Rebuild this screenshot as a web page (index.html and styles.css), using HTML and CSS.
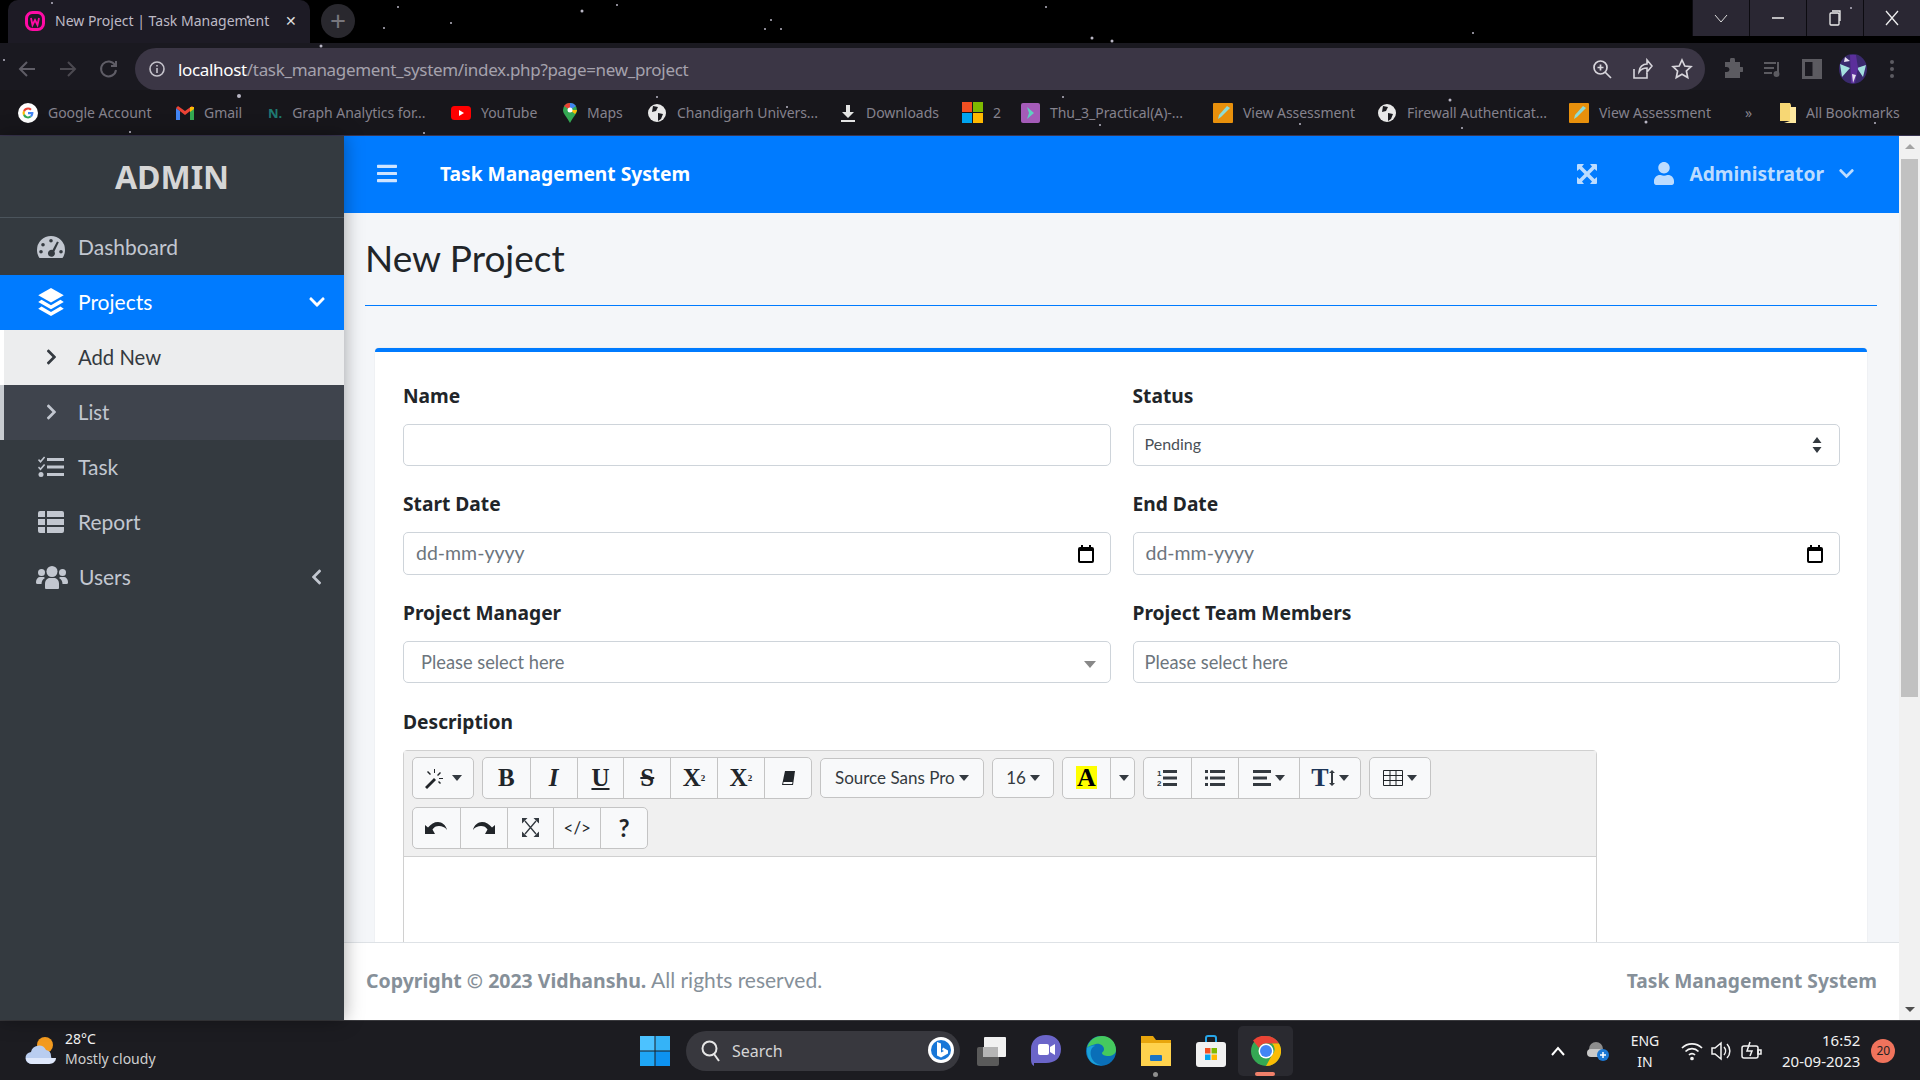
FILE: index.html
```html
<!DOCTYPE html>
<html lang="en">
<head>
	<meta charset="UTF-8">
	<title>New Project | Task Management System</title>
	<link rel="stylesheet" href="styles.css">
</head>
<body>
	<div class="chrome">
		<svg class="stars" width="1920" height="135" fill="#b9b6c4">
			<circle cx="582" cy="11" r="1.5"/><circle cx="398" cy="7" r="1"/><circle cx="451" cy="23" r="1"/><circle cx="384" cy="28" r="1"/><circle cx="771" cy="20" r="1"/><circle cx="765" cy="29" r="1"/><circle cx="781" cy="29" r="1"/><circle cx="321" cy="46" r="1.5"/><circle cx="239" cy="96" r="2"/><circle cx="248" cy="17" r="1.5"/><circle cx="657" cy="97" r="1"/><circle cx="617" cy="5" r="1"/><circle cx="424" cy="133" r="1"/><circle cx="787" cy="107" r="1"/><circle cx="1046" cy="7" r="1"/><circle cx="1092" cy="38" r="1.5"/><circle cx="1112" cy="41" r="1.5"/><circle cx="1473" cy="33" r="1"/><circle cx="1063" cy="97" r="1"/><circle cx="1450" cy="100" r="1.5"/><circle cx="1646" cy="122" r="1.5"/><circle cx="1875" cy="123" r="1"/><circle cx="1851" cy="8" r="1"/><circle cx="1462" cy="128" r="1"/><circle cx="1300" cy="124" r="1"/><circle cx="1100" cy="125" r="1"/><circle cx="52" cy="3" r="1"/><circle cx="4" cy="60" r="1"/><circle cx="130" cy="132" r="1"/>
		</svg>
		<div class="tabstrip">
			<div class="tab">
				<svg class="favicon" viewBox="0 0 20 20" width="20" height="20"><rect x="1.5" y="1.5" width="17" height="17" rx="6" fill="none" stroke="#ff0ba5" stroke-width="3"/><path d="M6 7l1.500 7L10 9l2.500 5L14 7" fill="none" stroke="#ff0ba5" stroke-width="1.800"/></svg>
				<span class="tab-title">New Project | Task Management</span>
				<span class="tab-close">✕</span>
			</div>
			<div class="new-tab">+</div>
			<div class="win-btns">
				<div class="win-btn"><svg width="14" height="14" viewBox="0 0 14 14" fill="none" stroke="#ddd" stroke-width="1"><path d="M1 4l6 7 6-7"/></svg></div>
				<div class="win-btn"><svg width="14" height="14" viewBox="0 0 14 14" stroke="#eee" stroke-width="1.500"><path d="M1 7h12"/></svg></div>
				<div class="win-btn"><svg width="14" height="16" viewBox="0 0 14 16" fill="none" stroke="#eee" stroke-width="1.300"><rect x="2" y="3" width="9" height="12" rx="1"/><path d="M4 1h8v10"/></svg></div>
				<div class="win-btn"><svg width="14" height="16" viewBox="0 0 14 16" stroke="#eee" stroke-width="1.300"><path d="M1 1l12 14M13 1L1 15"/></svg></div>
			</div>
		</div>
		<div class="toolbar">
			<svg class="nav-icon" width="20" height="20" viewBox="0 0 20 20" fill="none" stroke="#5f5d66" stroke-width="2"><path d="M18 10H3M10 3l-7 7 7 7"/></svg>
			<svg class="nav-icon" width="20" height="20" viewBox="0 0 20 20" fill="none" stroke="#4b4950" stroke-width="2"><path d="M2 10h15M10 3l7 7-7 7"/></svg>
			<svg class="nav-icon" width="20" height="20" viewBox="0 0 20 20" fill="none" stroke="#5f5d66" stroke-width="2"><path d="M16 6a7.500 7.500 0 1 0 1 5"/><path d="M17 2v5h-5"/></svg>
			<div class="urlbar">
				<svg class="info" width="18" height="18" viewBox="0 0 18 18" fill="none" stroke="#c5c3cb" stroke-width="1.600"><circle cx="9" cy="9" r="7"/><path d="M9 8v5M9 5v1.500"/></svg>
				<span class="url"><b>localhost</b>/task_management_system/index.php?page=new_project</span>
				<svg class="url-icon" width="22" height="22" viewBox="0 0 22 22" fill="none" stroke="#d8d6dc" stroke-width="1.700"><circle cx="9.500" cy="9.500" r="6.500"/><path d="M14 14l6 6M9.500 6.500v6M6.500 9.500h6"/></svg>
				<svg class="url-icon" width="22" height="22" viewBox="0 0 22 22" fill="none" stroke="#d8d6dc" stroke-width="1.600"><path d="M3 11v9h13v-5"/><path d="M8 14c0-5 4-8 8-8V2l5 6-5 6v-4c-3 0-6 1-8 4z"/></svg>
				<svg class="url-icon" width="22" height="22" viewBox="0 0 22 22" fill="none" stroke="#d8d6dc" stroke-width="1.700"><path d="M11 2l2.800 6 6.200.7-4.600 4.300 1.300 6.500L11 16.300l-5.700 3.200L6.600 13 2 8.700 8.200 8z"/></svg>
			</div>
			<div class="ext-icons">
				<svg width="20" height="22" viewBox="0 0 20 22" fill="#5c5b61"><path d="M7 2a2.500 2.500 0 0 1 5 0v2h5v5h2a2.500 2.500 0 0 1 0 5h-2v6H2v-6h2a2.500 2.500 0 0 0 0-5H2V4h5z"/></svg>
				<svg width="20" height="20" viewBox="0 0 20 20" fill="none" stroke="#5c5b61" stroke-width="2"><path d="M1 4h12M1 9h10M1 14h8M15 3v12"/><circle cx="13.500" cy="15" r="2" fill="#5c5b61"/></svg>
				<svg width="20" height="20" viewBox="0 0 20 20" fill="none" stroke="#5c5b61"><rect x="1.500" y="1.500" width="17" height="17" stroke-width="3"/><rect x="11" y="2" width="6" height="16" fill="#5c5b61"/></svg>
				<svg class="avatar" width="28" height="30" viewBox="0 0 28 30"><ellipse cx="14" cy="15" rx="14" ry="15" fill="#3a2a6e"/><path d="M1 10l10 4-8 9zM27 11l-9 3 6 9z" fill="#a4e0e0"/><path d="M11 1h6l2 13-3 15h-4z" fill="#5b2f9b"/><path d="M6 3l5 4-6 1zM13 20l4 1-3 8z" fill="#e6e0f0"/></svg>
				<svg width="6" height="20" viewBox="0 0 6 20" fill="#5c5b61"><circle cx="3" cy="3" r="2"/><circle cx="3" cy="10" r="2"/><circle cx="3" cy="17" r="2"/></svg>
			</div>
		</div>
		<div class="bookmarks">
			<div class="bm"><svg width="20" height="20" viewBox="0 0 20 20"><circle cx="10" cy="10" r="10" fill="#fff"/><path d="M10 4.500a5.500 5.500 0 0 1 3.700 1.400l-1.500 1.500A3.300 3.300 0 0 0 6.900 9L5.100 7.600A5.500 5.500 0 0 1 10 4.500z" fill="#ea4335"/><path d="M5.100 7.600L6.900 9a3.300 3.300 0 0 0 0 2l-1.800 1.400a5.500 5.500 0 0 1 0-4.800z" fill="#fbbc05"/><path d="M6.900 11a3.300 3.300 0 0 0 5 1.800l1.700 1.300a5.500 5.500 0 0 1-8.500-1.700z" fill="#34a853"/><path d="M15.400 9H10v2.200h3.100a2.700 2.700 0 0 1-1.200 1.600l1.700 1.300c1.200-1.100 2-3 1.800-5.100z" fill="#4285f4"/></svg><span>Google Account</span></div>
			<div class="bm"><svg width="18" height="14" viewBox="0 0 18 14"><path d="M0 2v12h4V5z" fill="#4285f4"/><path d="M14 5v9h4V2z" fill="#34a853"/><path d="M0 2l9 7 9-7-2-2-7 5-7-5z" fill="#ea4335"/><path d="M14 1l4 0v2l-4 3z" fill="#fbbc05"/></svg><span>Gmail</span></div>
			<div class="bm"><b class="bm-n">N.</b><span>Graph Analytics for...</span></div>
			<div class="bm"><svg width="20" height="14" viewBox="0 0 20 14"><rect width="20" height="14" rx="3.500" fill="#f00"/><path d="M8 4l5 3-5 3z" fill="#fff"/></svg><span>YouTube</span></div>
			<div class="bm"><svg width="14" height="20" viewBox="0 0 14 20"><path d="M7 0a7 7 0 0 1 7 7c0 4-4 7-7 13C4 14 0 11 0 7a7 7 0 0 1 7-7z" fill="#34a853"/><path d="M1 3a7 7 0 0 1 6-3v7z" fill="#ea4335"/><path d="M7 0a7 7 0 0 1 6 3L7 7z" fill="#4285f4"/><path d="M14 7c0 1-1 3-2 4L7 7z" fill="#fbbc05"/><circle cx="7" cy="7" r="2.500" fill="#fff"/></svg><span>Maps</span></div>
			<div class="bm"><svg width="20" height="20" viewBox="0 0 20 20"><circle cx="10" cy="10" r="9" fill="#e8e8e8"/><path d="M6 3l5 1-2 4-4 1zM11 10l5 1-2 5-3 2z" fill="#1a1a1f"/></svg><span>Chandigarh Univers...</span></div>
			<div class="bm"><svg width="16" height="20" viewBox="0 0 16 20" fill="#e4e4e4"><path d="M6 2h4v7h4l-6 6-6-6h4zM1 17h14v2H1z"/></svg><span>Downloads</span></div>
			<div class="bm"><svg width="21" height="21" viewBox="0 0 21 21"><rect width="10" height="10" fill="#f25022"/><rect x="11" width="10" height="10" fill="#7fba00"/><rect y="11" width="10" height="10" fill="#00a4ef"/><rect x="11" y="11" width="10" height="10" fill="#ffb900"/></svg><span>2</span></div>
			<div class="bm"><svg width="19" height="20" viewBox="0 0 19 20"><rect width="19" height="20" rx="2" fill="#a45bb8"/><path d="M6 4l7 6-7 6 2-6z" fill="#5fd0c0"/></svg><span>Thu_3_Practical(A)-...</span></div>
			<div class="bm"><svg width="20" height="20" viewBox="0 0 20 20"><rect width="20" height="20" rx="1" fill="#e8900c"/><path d="M5 16l1-4 8-9 3 2-9 9z" fill="#8fdcd6"/></svg><span>View Assessment</span></div>
			<div class="bm"><svg width="20" height="20" viewBox="0 0 20 20"><circle cx="10" cy="10" r="9" fill="#e8e8e8"/><path d="M6 3l5 1-2 4-4 1zM11 10l5 1-2 5-3 2z" fill="#1a1a1f"/></svg><span>Firewall Authenticat...</span></div>
			<div class="bm"><svg width="20" height="20" viewBox="0 0 20 20"><rect width="20" height="20" rx="1" fill="#e8900c"/><path d="M5 16l1-4 8-9 3 2-9 9z" fill="#8fdcd6"/></svg><span>View Assessment</span></div>
			<div class="bm"><span>»</span></div>
			<div class="bm"><svg width="16" height="20" viewBox="0 0 16 20"><path d="M0 0h10l1 2v16H0z" fill="#f7d774"/><path d="M10 4h6v16H4l6-2z" fill="#ffe9a0"/></svg><span>All Bookmarks</span></div>
		</div>
	</div>

	<div class="viewport">
		<aside class="sidebar">
			<div class="brand">ADMIN</div>
			<nav class="side-nav">
				<a class="nav-item"><svg class="nav-ico" viewBox="0 0 28 24"><path fill-rule="evenodd" d="M14 1A14 14 0 0 0 0 15c0 3 1 6 2.500 8h23C27 21 28 18 28 15A14 14 0 0 0 14 1zM14 4a1.800 1.800 0 1 1 0 3.600A1.800 1.800 0 0 1 14 4zM6 8a1.800 1.800 0 1 1 0 3.600A1.800 1.800 0 0 1 6 8zM4 15a1.800 1.800 0 1 1 0 3.600A1.800 1.800 0 0 1 4 15zM24 15a1.800 1.800 0 1 1 0 3.600 1.800 1.800 0 0 1 0-3.600zM20 6.500l1.800.7-4.400 9.300A3.500 3.500 0 1 1 15.500 15z"/></svg><span>Dashboard</span></a>
				<a class="nav-item active"><svg class="nav-ico tall" viewBox="2 0 24 27"><path d="M14 1l11.500 6.500L14 14 2.500 7.500z"/><path d="M5.500 11.500L14 16.500l8.500-5 3 2L14 20 2.500 13.500z"/><path d="M5.500 17.500L14 22.500l8.500-5 3 2L14 26 2.500 19.500z"/></svg><span>Projects</span><svg class="nav-arrow down" width="16" height="18" viewBox="0 0 448 512"><path d="M207.029 381.476L12.686 187.132c-9.373-9.373-9.373-24.569 0-33.941l22.667-22.667c9.357-9.357 24.522-9.375 33.901-.04L224 284.505l154.745-154.021c9.379-9.335 24.544-9.317 33.901.04l22.667 22.667c9.373 9.373 9.373 24.569 0 33.941L240.971 381.476c-9.373 9.372-24.569 9.372-33.942 0z"/></svg></a>
				<a class="nav-item sub current"><svg class="sub-ico" width="11" height="18" viewBox="0 0 320 512"><path d="M285.476 272.971L91.132 467.314c-9.373 9.373-24.569 9.373-33.941 0l-22.667-22.667c-9.357-9.357-9.375-24.522-.04-33.901L188.505 256 34.484 101.255c-9.335-9.379-9.317-24.544.04-33.901l22.667-22.667c9.373-9.373 24.569-9.373 33.941 0L285.475 239.03c9.373 9.372 9.373 24.568.001 33.941z"/></svg><span>Add New</span></a>
				<a class="nav-item sub"><svg class="sub-ico" width="11" height="18" viewBox="0 0 320 512"><path d="M285.476 272.971L91.132 467.314c-9.373 9.373-24.569 9.373-33.941 0l-22.667-22.667c-9.357-9.357-9.375-24.522-.04-33.901L188.505 256 34.484 101.255c-9.335-9.379-9.317-24.544.04-33.901l22.667-22.667c9.373-9.373 24.569-9.373 33.941 0L285.475 239.03c9.373 9.372 9.373 24.568.001 33.941z"/></svg><span>List</span></a>
				<a class="nav-item"><svg class="nav-ico" viewBox="0 0 28 24"><path d="M10 3h17v3H10zM10 10.500h17v3H10zM10 18h17v3H10z"/><path d="M2 4l1.500 1.500L7 1.500l1.200 1L3.500 8 1 5.200zM2 11.500L3.500 13 7 9l1.200 1-4.700 5.500L1 12.700z"/><circle cx="4" cy="19.500" r="2.500"/></svg><span>Task</span></a>
				<a class="nav-item"><svg class="nav-ico" viewBox="0 0 28 24"><path d="M3 1h5v6H1V3a2 2 0 0 1 2-2zM10 1h15a2 2 0 0 1 2 2v4H10zM1 9h7v6H1zM10 9h17v6H10zM1 17h7v6H3a2 2 0 0 1-2-2zM10 17h17v4a2 2 0 0 1-2 2H10z"/></svg><span>Report</span></a>
				<a class="nav-item"><svg class="nav-ico wide" viewBox="0 0 32 24"><circle cx="16" cy="6.500" r="5.500"/><circle cx="5.500" cy="7.500" r="3.500"/><circle cx="26.500" cy="7.500" r="3.500"/><path d="M9 23v-4c0-3.500 2-6 5-6h4c3 0 5 2.500 5 6v4a1 1 0 0 1-1 1H10a1 1 0 0 1-1-1z"/><path d="M0 17c0-3 2-5 4-5h3c1 0 1.500.5 2 1-2 1-3.500 3-3.500 6H1.500A1.500 1.500 0 0 1 0 17.500zM32 17c0-3-2-5-4-5h-3c-1 0-1.500.5-2 1 2 1 3.500 3 3.500 6h4a1.500 1.500 0 0 0 1.500-1.500z"/></svg><span>Users</span><svg class="nav-arrow flip" width="11" height="18" viewBox="0 0 320 512"><path d="M285.476 272.971L91.132 467.314c-9.373 9.373-24.569 9.373-33.941 0l-22.667-22.667c-9.357-9.357-9.375-24.522-.04-33.901L188.505 256 34.484 101.255c-9.335-9.379-9.317-24.544.04-33.901l22.667-22.667c9.373-9.373 24.569-9.373 33.941 0L285.475 239.03c9.373 9.372 9.373 24.568.001 33.941z"/></svg></a>
			</nav>
		</aside>

		<main class="main">
			<header class="topbar">
				<svg class="bars" width="20" height="23" viewBox="0 0 448 512"><path d="M16 132h416c8.837 0 16-7.163 16-16V76c0-8.837-7.163-16-16-16H16C7.163 60 0 67.163 0 76v40c0 8.837 7.163 16 16 16zm0 160h416c8.837 0 16-7.163 16-16v-40c0-8.837-7.163-16-16-16H16c-8.837 0-16 7.163-16 16v40c0 8.837 7.163 16 16 16zm0 160h416c8.837 0 16-7.163 16-16v-40c0-8.837-7.163-16-16-16H16c-8.837 0-16 7.163-16 16v40c0 8.837 7.163 16 16 16z"/></svg>
				<span class="app-title">Task Management System</span>
				<svg class="expand" width="20" height="20" viewBox="0 0 20 20"><path d="M0 1a1 1 0 0 1 1-1h6L5 2.500 10 7.500 15 2.500 13 0h6a1 1 0 0 1 1 1v6l-2.500-2L12.500 10l5 5 2.500-2v6a1 1 0 0 1-1 1h-6l2-2.500-5-5-5 5L7 20H1a1 1 0 0 1-1-1v-6l2.500 2 5-5-5-5L0 7z"/></svg>
				<svg class="user-ico" width="20" height="23" viewBox="0 0 448 512"><path d="M224 256c70.700 0 128-57.300 128-128S294.700 0 224 0 96 57.300 96 128s57.300 128 128 128zm89.600 32h-16.700c-22.200 10.200-46.900 16-72.900 16s-50.600-5.800-72.900-16h-16.700C60.200 288 0 348.200 0 422.400V464c0 26.500 21.500 48 48 48h352c26.500 0 48-21.500 48-48v-41.600c0-74.200-60.200-134.400-134.400-134.400z"/></svg>
				<span class="admin-name">Administrator</span>
				<svg class="admin-caret" width="15" height="17" viewBox="0 0 448 512"><path d="M207.029 381.476L12.686 187.132c-9.373-9.373-9.373-24.569 0-33.941l22.667-22.667c9.357-9.357 24.522-9.375 33.901-.04L224 284.505l154.745-154.021c9.379-9.335 24.544-9.317 33.901.04l22.667 22.667c9.373 9.373 9.373 24.569 0 33.941L240.971 381.476c-9.373 9.372-24.569 9.372-33.942 0z"/></svg>
			</header>

			<div class="content">
				<h1 class="page-title">New Project</h1>
				<hr class="title-rule">
				<section class="card">
					<div class="form-grid">
						<div class="field"><label>Name</label><div class="control"></div></div>
						<div class="field"><label>Status</label><div class="control small">Pending<svg class="updown" width="10" height="16" viewBox="0 0 10 16" fill="#343a40"><path d="M5 0l4.500 6H.5zM5 16L.5 10h9z"/></svg></div></div>
						<div class="field"><label>Start Date</label><div class="control date">dd-mm-yyyy<svg class="cal" width="16" height="18" viewBox="0 0 16 18" fill="none" stroke="#000" stroke-width="2"><rect x="1" y="3" width="14" height="14" rx="1"/><path d="M1 5h14M4 0v3M12 0v3"/></svg></div></div>
						<div class="field"><label>End Date</label><div class="control date">dd-mm-yyyy<svg class="cal" width="16" height="18" viewBox="0 0 16 18" fill="none" stroke="#000" stroke-width="2"><rect x="1" y="3" width="14" height="14" rx="1"/><path d="M1 5h14M4 0v3M12 0v3"/></svg></div></div>
						<div class="field"><label>Project Manager</label><div class="control select2">Please select here<i class="s2-caret"></i></div></div>
						<div class="field"><label>Project Team Members</label><div class="control placeholder">Please select here</div></div>
					</div>
					<div class="field desc">
						<label>Description</label>
						<div class="editor">
							<div class="ed-toolbar">
								<div class="ed-row">
									<div class="btn-group"><button class="tb w60"><svg width="24" height="22" viewBox="0 0 24 22" fill="#212529"><path d="M1 20l9-9 2 2-9 9zM10 2h1v4h-1zM3 5l1-1 3 3-1 1zM16 5l1 1-3 3-1-1zM15 11h4v1h-4zM14 15l1-1 2 2-1 1z"/></svg><i class="caret"></i></button></div>
									<div class="btn-group">
										<button class="tb w47 serif">B</button>
										<button class="tb w47 serif it">I</button>
										<button class="tb w47 serif un">U</button>
										<button class="tb w47 serif st">S</button>
										<button class="tb w47 serif">X<sup>2</sup></button>
										<button class="tb w47 serif">X<sub>2</sub></button>
										<button class="tb w47"><svg width="16" height="16" viewBox="0 0 16 16"><path d="M5 1h10l-2 14H2z" fill="#212529"/><path d="M3.500 12h9l-.4 2H3.200z" fill="#f8f9fa"/></svg></button>
									</div>
									<div class="btn-group low"><button class="tb w162 txt">Source Sans Pro<i class="caret"></i></button></div>
									<div class="btn-group low"><button class="tb w60 txt">16<i class="caret"></i></button></div>
									<div class="btn-group">
										<button class="tb w47"><span class="hl">A</span></button>
										<button class="tb w24"><i class="caret"></i></button>
									</div>
									<div class="btn-group">
										<button class="tb w47"><svg width="20" height="18" viewBox="0 0 20 18" fill="#343a40"><path d="M6 1h14v3H6zM6 7.500h14v3H6zM6 14h14v3H6z"/><text x="0" y="7" font-size="8" font-family="Liberation Sans" font-weight="700">1</text><text x="0" y="17" font-size="8" font-family="Liberation Sans" font-weight="700">2</text></svg></button>
										<button class="tb w47"><svg width="20" height="18" viewBox="0 0 20 18" fill="#343a40"><path d="M5 1h15v3H5zM5 7.500h15v3H5zM5 14h15v3H5zM0 1h3v3H0zM0 7.500h3v3H0zM0 14h3v3H0z"/></svg></button>
										<button class="tb w61"><svg width="18" height="16" viewBox="0 0 18 16" fill="#343a40"><path d="M0 0h18v3H0zM0 6.500h14v3H0zM0 13h18v3H0z"/></svg><i class="caret"></i></button>
										<button class="tb w61 serif tsize">T<svg width="6" height="16" viewBox="0 0 6 16" fill="#343a40"><path d="M3 0l3 3H4v10h2l-3 3-3-3h2V3H0z"/></svg><i class="caret"></i></button>
									</div>
									<div class="btn-group"><button class="tb w60"><svg width="20" height="16" viewBox="0 0 20 16" fill="none" stroke="#212529" stroke-width="1"><path d="M.5.5h19v15H.5zM.5 5.500h19M.5 10.500h19M7 .5v15M13 .5v15"/></svg><i class="caret"></i></button></div>
								</div>
								<div class="ed-row">
									<div class="btn-group">
										<button class="tb w47"><svg width="22" height="12" viewBox="0 0 22 12" fill="#212529"><path d="M0 12V3l3 2.500C6 2 9 0 13 0c4 0 8 3 9 8-2-3-5-4-8-4-3 0-5 1-6.500 3.500L10 12z"/></svg></button>
										<button class="tb w47"><svg width="22" height="12" viewBox="0 0 22 12" fill="#212529"><path d="M22 12V3l-3 2.500C16 2 13 0 9 0 5 0 1 3 0 8c2-3 5-4 8-4 3 0 5 1 6.500 3.500L12 12z"/></svg></button>
										<button class="tb w47"><svg width="17" height="19" viewBox="0 0 17 19" fill="#343a40" stroke="#343a40"><path d="M3 3l11 13M14 3L3 16" stroke-width="1.300" fill="none"/><path d="M0 0h5.500L0 5.500zM17 0h-5.500L17 5.500zM0 19h5.500L0 13.500zM17 19h-5.500L17 13.500z" stroke="none"/></svg></button>
										<button class="tb w47 code">&lt;/&gt;</button>
										<button class="tb w47 help">?</button>
									</div>
								</div>
							</div>
							<div class="ed-body"></div>
						</div>
					</div>
				</section>
			</div>

			<footer class="footer">
				<span><b>Copyright © 2023 Vidhanshu.</b> All rights reserved.</span>
				<b class="footer-app">Task Management System</b>
			</footer>
		</main>

		<div class="scrollbar">
			<i class="sb-up"></i>
			<div class="sb-thumb"></div>
			<i class="sb-down"></i>
		</div>
	</div>

	<div class="taskbar">
		<div class="weather">
			<svg width="32" height="30" viewBox="0 0 32 30"><circle cx="20" cy="9" r="8" fill="#f39a1f"/><path d="M7 28a6 6 0 0 1-1-12 8 8 0 0 1 15-2 6 6 0 0 1 5 6 8 8 0 0 1-2 8z" fill="#b9cdf0"/><path d="M7 28a6 6 0 0 1-6-6h30c0 3-3 6-7 6z" fill="#dfe8fb"/></svg>
			<div class="weather-text"><span>28°C</span><span class="dim">Mostly cloudy</span></div>
		</div>
		<div class="task-center">
			<svg width="30" height="30" viewBox="0 0 30 30"><rect width="14.500" height="14.500" fill="#4cc2ff"/><rect x="15.500" width="14.500" height="14.500" fill="#35b3f7"/><rect y="15.500" width="14.500" height="14.500" fill="#1fa6f5"/><rect x="15.500" y="15.500" width="14.500" height="14.500" fill="#0d92f0"/></svg>
			<div class="search">
				<svg width="20" height="22" viewBox="0 0 20 22" fill="none" stroke="#e6e6e6" stroke-width="2"><circle cx="8.500" cy="8.500" r="7"/><path d="M13 14l5 7"/></svg>
				<span>Search</span>
				<svg class="bing" width="28" height="30" viewBox="0 0 28 30"><circle cx="14" cy="14" r="13" fill="#fff"/><circle cx="14" cy="14" r="10" fill="#1877d8"/><path d="M10 6l4 1.500v9l3-1.500-2-1 1-2.500 5 3v3l-7 4-4-2z" fill="#fff"/></svg>
			</div>
			<div class="task-apps">
				<div class="app"><svg width="30" height="30" viewBox="0 0 30 30"><rect x="1" y="11" width="22" height="19" rx="2" fill="#5a5a5a"/><rect x="8" y="1" width="22" height="20" rx="1" fill="#f1f1f1"/><rect x="7" y="11" width="15" height="10" fill="#b5b5b5"/></svg></div>
				<div class="app"><svg width="30" height="32" viewBox="0 0 30 32"><path d="M15 0c9 0 15 6 15 14 0 9-6 14-15 14H3v3c-2-1-3-3-3-6V14C0 6 6 0 15 0z" fill="#6b65c9"/><rect x="7" y="9" width="11" height="11" rx="2" fill="#fff"/><path d="M19 12l5-3v11l-5-3z" fill="#fff"/></svg></div>
				<div class="app"><svg width="30" height="30" viewBox="0 0 30 30"><circle cx="15" cy="15" r="15" fill="#0a6fb8"/><path d="M1 12C3 4 9 0 16 0c8 0 14 6 14 14 0 4-4 6-8 6-3 0-6-1-6-3 0-1 2-1 2-4 0-3-4-6-8-5-5 1-8 3-9 4z" fill="#45c95e"/><path d="M1 12c3-2 6-3 8-2-4 1-5 6-4 10 1 4 4 8 10 9C6 30 0 23 1 12z" fill="#1ba0d8"/></svg></div>
				<div class="app with-dot"><svg width="30" height="30" viewBox="0 0 30 30"><path d="M0 0h12l3 4h15v26H0z" fill="#e8a50c"/><rect y="7" width="30" height="23" fill="#ffd24d"/><rect x="9" y="19" width="12" height="6" rx="1" fill="#1a74c4"/></svg></div>
				<div class="app"><svg width="30" height="32" viewBox="0 0 30 32"><path d="M10 7V3a2 2 0 0 1 2-2h6a2 2 0 0 1 2 2v4" fill="none" stroke="#27a5e8" stroke-width="2"/><rect y="7" width="30" height="25" rx="3" fill="#f1f1f1"/><rect x="9" y="13" width="5.500" height="5.500" fill="#f25022"/><rect x="15.500" y="13" width="5.500" height="5.500" fill="#7fba00"/><rect x="9" y="19.500" width="5.500" height="5.500" fill="#00a4ef"/><rect x="15.500" y="19.500" width="5.500" height="5.500" fill="#ffb900"/></svg></div>
				<div class="app chrome-app"><svg width="30" height="30" viewBox="0 0 30 30"><circle cx="15" cy="15" r="15" fill="#34a853"/><path d="M15 0a15 15 0 0 1 13 7.500H15A7.500 7.500 0 0 0 8 12L2 4.500A15 15 0 0 1 15 0z" fill="#ea4335"/><path d="M28 7.500A15 15 0 0 1 15 30l6-11a7.500 7.500 0 0 0 0-11.500z" fill="#fbbc05"/><circle cx="15" cy="15" r="7.500" fill="#fff"/><circle cx="15" cy="15" r="6" fill="#4285f4"/></svg></div>
			</div>
		</div>
		<div class="tray">
			<svg width="16" height="10" viewBox="0 0 16 10" fill="none" stroke="#fff" stroke-width="2"><path d="M2 9l6-7 6 7"/></svg>
			<svg class="tray-cloud" width="22" height="22" viewBox="0 0 22 22"><circle cx="9" cy="9" r="7" fill="#8d8d8d"/><rect y="9" width="16" height="8" rx="4" fill="#c9c9c9"/><circle cx="16" cy="15" r="6" fill="#1c78d4"/><path d="M13 15h6M16 12v6" stroke="#fff" stroke-width="1.500"/></svg>
			<div class="lang"><span>ENG</span><span>IN</span></div>
			<svg class="tray-ico" width="22" height="20" viewBox="0 0 22 20" fill="none" stroke="#f2f2f2" stroke-width="1.700"><path d="M1 7a14 14 0 0 1 20 0M4.500 10.500a9 9 0 0 1 13 0M8 14a4 4 0 0 1 6 0"/><circle cx="11" cy="17.500" r="1" fill="#f2f2f2"/></svg>
			<svg class="tray-ico" width="22" height="20" viewBox="0 0 22 20" fill="none" stroke="#f2f2f2" stroke-width="1.500"><path d="M1 7v6h3l6 5V2L4 7zM13 6a6 6 0 0 1 0 8M16 3a10 10 0 0 1 0 14"/></svg>
			<svg class="tray-ico" width="22" height="20" viewBox="0 0 22 20" fill="none" stroke="#f2f2f2" stroke-width="1.500"><rect x="1" y="5" width="16" height="12" rx="2"/><rect x="17" y="9" width="3" height="4"/><path d="M9 1L6 10h5l-2 5"/></svg>
			<div class="clock"><span>16:52</span><span>20-09-2023</span></div>
			<div class="badge">20</div>
		</div>
	</div>
</body>
</html>
```

FILE: styles.css
```css
*{margin:0;padding:0;box-sizing:border-box;}
html,body{height:100%;}
body{
	height:100vh;
	overflow:hidden;
	display:flex;
	flex-direction:column;
	font-family:Lato,"Liberation Sans",sans-serif;
	background:#f4f6f9;
}

/* browser chrome */
.chrome{
	position:relative;
	flex:none;
	height:135px;
	background:#000;
	font-family:"Noto Sans","Liberation Sans",sans-serif;
}
.stars{
	position:absolute;
	left:0;
	top:0;
	z-index:2;
	pointer-events:none;
}
.tabstrip{
	height:43px;
	display:flex;
	align-items:flex-start;
	padding-left:8px;
}
.tab{
	width:302px;
	height:43px;
	background:#1d1b25;
	border-radius:10px 10px 0 0;
	display:flex;
	align-items:center;
	padding:0 13px 2px 17px;
	color:#bdbac5;
	font-size:14px;
}
.favicon{flex:none;margin-right:10px;}
.tab-title{white-space:nowrap;}
.tab-close{margin-left:auto;font-size:14px;color:#ddd;}
.new-tab{
	width:34px;
	height:34px;
	margin:4px 0 0 11px;
	border-radius:50%;
	background:#29282e;
	color:#77767c;
	font-size:28px;
	line-height:32px;
	text-align:center;
}
.win-btns{
	margin-left:auto;
	display:flex;
	height:36px;
}
.win-btn{
	width:57px;
	height:36px;
	background:#2a2733;
	border-left:1px solid #0c0b10;
	display:flex;
	align-items:center;
	justify-content:center;
}
.toolbar{
	height:47px;
	background:#1a1920;
	display:flex;
	align-items:flex-start;
	padding:5px 0 0 17px;
}
.nav-icon{margin:11px 21px 0 0;}
.nav-icon:nth-child(3){margin-right:16px;}
.urlbar{
	width:1570px;
	height:42px;
	background:#3b3645;
	border-radius:21px;
	display:flex;
	align-items:center;
	padding:0 12px 0 13px;
}
.url{
	flex:1;
	margin-left:12px;
	color:#a5a2ad;
	font-size:17px;
	letter-spacing:-.33px;
}
.url b{color:#fff;font-weight:400;}
.url-icon{margin-left:18px;}
.ext-icons{
	flex:1;
	display:flex;
	align-items:center;
	justify-content:space-between;
	height:42px;
	padding:0 25px 0 18px;
}
.avatar{transform:translateX(-3px);}
.bookmarks{
	height:45px;
	background:#17161b;
	display:grid;
	grid-template-columns:158px 92px 183px 112px 84px 193px 122px 59px 192px 164px 192px 176px 35px 130px;
	padding-left:18px;
	align-items:center;
	color:#85828d;
	font-size:14px;
}
.bm{
	display:flex;
	align-items:center;
	gap:10px;
	white-space:nowrap;
	overflow:hidden;
	letter-spacing:-.05px;
}
.bm-n{color:#1f7a72;font-size:13px;}

/* page */
.viewport{
	flex:1;
	display:flex;
	min-height:0;
	border-top:1px solid #3a3550;
}
.sidebar{
	width:344px;
	flex:none;
	background:#343a40;
	box-shadow:0 0 18px rgba(0,0,0,.35);
	position:relative;
	z-index:1;
	color:#c2c7d0;
	font-size:21px;
}
.brand{
	height:82px;
	border-bottom:1px solid #4b545c;
	display:flex;
	align-items:center;
	justify-content:center;
	font-family:"Noto Sans",sans-serif;
	font-size:32px;
	font-weight:700;
	color:#d6d6d6;
}
.side-nav{padding-top:2px;}
.nav-item{
	height:55px;
	display:flex;
	align-items:center;
	padding:0 20px 2px 37px;
	color:#c2c7d0;
	fill:#c2c7d0;
}
.nav-ico{
	width:28px;
	height:24px;
	flex:none;
	margin-right:13px;
}
.nav-ico.tall{height:30px;}
.nav-ico.wide{width:32px;margin:0 11px 0 -1px;}
.nav-arrow{margin-left:auto;margin-right:2px;}
.nav-arrow.down{margin-right:-1px;}
.flip{transform:rotate(180deg);}
.nav-item.active{background:#007bff;color:#fff;fill:#fff;}
.nav-item.sub{
	background:#3f444d;
	border-left:4px solid #c8ccd1;
	padding-left:42px;
	font-size:20.300px;
}
.sub-ico{margin-right:21px;}
.nav-item.current{
	background:#ecedee;
	border-left-color:#fff;
	color:#343a40;
	fill:#343a40;
}

.main{
	flex:1;
	min-width:0;
	display:flex;
	flex-direction:column;
}
.topbar{
	flex:none;
	height:77px;
	background:#007bff;
	display:flex;
	align-items:center;
	padding:0 45px 2px 0;
	color:#fff;
}
.bars{margin-left:33px;fill:#cfe4ff;}
.app-title{
	margin-left:43px;
	font-family:"Noto Sans",sans-serif;
	font-size:19.200px;
	font-weight:700;
}
.expand{margin-left:auto;fill:#bcdcff;}
.user-ico{margin-left:57px;fill:#bcdcff;}
.admin-name{
	margin-left:15px;
	font-family:"Noto Sans",sans-serif;
	font-size:19.200px;
	font-weight:700;
	color:#bcdcff;
}
.admin-caret{margin-left:15px;fill:#bcdcff;}

.content{
	flex:1;
	min-height:0;
	overflow:hidden;
	padding:0 22px 0 21px;
}
.page-title{
	font-size:37px;
	font-weight:400;
	line-height:46px;
	color:#212529;
	margin-top:22px;
}
.title-rule{
	border:0;
	border-top:1px solid #007bff;
	margin-top:24px;
}
.card{
	margin:42px 10px 0;
	background:#fff;
	border-top:4px solid #007bff;
	border-radius:4px 4px 0 0;
	box-shadow:0 0 1px rgba(0,0,0,.2);
	padding:29px 27px 0 28px;
}
.form-grid{
	display:grid;
	grid-template-columns:1fr 1fr;
	column-gap:22px;
	row-gap:23px;
}
label{
	display:block;
	height:30px;
	line-height:30px;
	margin-bottom:13px;
	font-family:"Noto Sans",sans-serif;
	font-size:19.200px;
	font-weight:700;
	color:#212529;
}
.control{
	position:relative;
	height:42px;
	border:1px solid #ced4da;
	border-radius:5px;
	display:flex;
	align-items:center;
	padding:0 12px 2px;
	font-size:18.300px;
	color:#6c757d;
}
.small{font-size:16px;color:#495057;padding:0 11px 3px;}
.updown{position:absolute;right:17px;top:12px;}
.date{font-size:19.500px;height:43px;}
.cal{position:absolute;right:16px;top:12px;}
.select2{padding:0 12px 0 17px;}
.placeholder{padding:0 11px;}
.s2-caret{
	position:absolute;
	right:14px;
	top:19px;
	border:6px solid transparent;
	border-top:7px solid #888;
	border-bottom:0;
}
.desc{margin-top:24px;}
.desc label{margin-bottom:12.500px;}

.editor{
	width:1194px;
	border:1px solid #d0d0d0;
	border-radius:4px 4px 0 0;
}
.ed-toolbar{
	height:106px;
	background:#f0f0f0;
	border-bottom:1px solid #d0d0d0;
	padding:6px 0 0 8px;
}
.ed-row{
	display:flex;
	gap:8px;
	height:42px;
	margin-bottom:8px;
}
.btn-group{
	display:flex;
	height:42px;
	border:1px solid #c4c4c4;
	border-radius:5px;
	background:#f8f9fa;
	overflow:hidden;
}
.btn-group.low{height:40px;margin-top:1px;}
.tb{
	height:100%;
	border:0;
	border-left:1px solid #c4c4c4;
	background:transparent;
	display:flex;
	align-items:center;
	justify-content:center;
	color:#212529;
	font-family:Lato,"Liberation Sans",sans-serif;
	font-size:20px;
}
.tb:first-child{border-left:0;}
.w47{width:46.800px;}
.w60{width:60px;}
.w61{width:61.200px;}
.w24{width:24.200px;}
.w162{width:162.500px;}
.txt{font-size:17px;color:#343a40;}
.serif{font-family:"Liberation Serif",serif;font-weight:700;font-size:25px;}
.it{font-style:italic;}
.un{text-decoration:underline;}
.st{text-decoration:line-through;}
.serif sup,.serif sub{font-size:9px;font-weight:700;line-height:0;}
.caret{
	display:block;
	margin-left:4px;
	border:5.500px solid transparent;
	border-top:6px solid #343a40;
	border-bottom:0;
}
.hl{
	background:#ff0;
	color:#000;
	font-family:"Liberation Serif",serif;
	font-weight:700;
	font-size:26px;
	line-height:23px;
	padding:0 1px;
}
.tsize{font-size:26px;color:#1d3557;}
.code{font-size:17px;}
.help{font-weight:700;font-size:24px;}
.ed-body{height:300px;background:#fff;}

.footer{
	flex:none;
	height:78px;
	background:#fff;
	border-top:1px solid #dee2e6;
	display:flex;
	align-items:center;
	justify-content:space-between;
	padding:0 22px 3px 22px;
	font-size:21px;
	color:#869099;
}
.footer b{font-family:"Noto Sans",sans-serif;font-size:19.500px;font-weight:700;}
.footer .footer-app{font-size:19.200px;}

.scrollbar{
	width:21px;
	flex:none;
	background:#f1f1f1;
	padding:3px 2px;
	display:flex;
	flex-direction:column;
	align-items:center;
}
.sb-thumb{
	width:17px;
	height:538px;
	margin-top:10px;
	background:#c1c1c1;
}
.sb-up{
	border:5px solid transparent;
	border-bottom:5px solid #a3a3a3;
	border-top:0;
	margin-top:5px;
}
.sb-down{
	margin-top:auto;
	margin-bottom:5px;
	border:5px solid transparent;
	border-top:5px solid #505050;
	border-bottom:0;
}

/* windows taskbar */
.taskbar{
	flex:none;
	height:60px;
	background:#1c1c21;
	border-top:1px solid #3a3a3e;
	display:flex;
	align-items:center;
	color:#f2f2f2;
	font-family:"Noto Sans","Liberation Sans",sans-serif;
	font-size:14px;
}
.weather{
	width:640px;
	display:flex;
	align-items:center;
	padding-left:25px;
}
.weather-text{
	display:flex;
	flex-direction:column;
	margin:0 0 3px 8px;
	line-height:20px;
}
.dim{color:#cfcfcf;}
.task-center{
	display:flex;
	align-items:center;
	width:900px;
}
.search{
	position:relative;
	width:274px;
	height:40px;
	margin-left:16px;
	background:#38383e;
	border-radius:20px;
	display:flex;
	align-items:center;
	padding-left:15px;
	gap:11px;
	font-size:16px;
	color:#d5d5d5;
}
.bing{position:absolute;right:5px;top:5px;}
.task-apps{
	display:flex;
	margin-left:3px;
}
.app{
	position:relative;
	width:55px;
	height:50px;
	display:flex;
	align-items:center;
	justify-content:center;
}
.with-dot::after{
	content:"";
	position:absolute;
	left:25px;
	bottom:-1px;
	width:5px;
	height:5px;
	border-radius:50%;
	background:#8e8e8e;
}
.chrome-app{background:#2a2a30;border-radius:5px;}
.chrome-app::after{
	content:"";
	position:absolute;
	left:17px;
	bottom:0;
	width:20px;
	height:4px;
	border-radius:2px;
	background:#f0806a;
}
.tray{
	flex:1;
	display:flex;
	align-items:center;
	padding-left:10px;
}
.tray-cloud{margin-left:21px;}
.lang{
	display:flex;
	flex-direction:column;
	align-items:center;
	line-height:21px;
	margin-left:20px;
	width:32px;
}
.tray-ico{margin-left:8px;}
.lang + .tray-ico{margin-left:20px;}
.clock{
	display:flex;
	flex-direction:column;
	align-items:flex-end;
	line-height:21px;
	font-size:15px;
	margin-left:19px;
}
.badge{
	width:24px;
	height:24px;
	margin-left:11px;
	border-radius:50%;
	background:#f0735c;
	color:#222;
	font-size:12px;
	line-height:24px;
	text-align:center;
}
```
